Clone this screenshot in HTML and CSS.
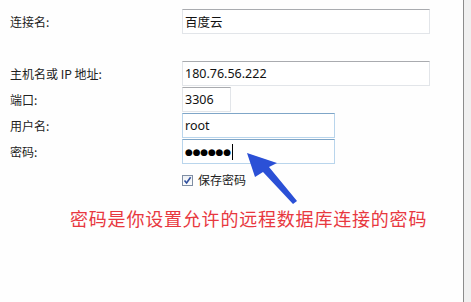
FILE: index.html
```html
<!DOCTYPE html>
<html lang="zh-CN">
<head>
<meta charset="utf-8">
<title>连接设置</title>
<link rel="stylesheet" href="styles.css">
</head>
<body>
<div class="window">
  <div class="form">
    <div class="row row-name">
      <label class="label">连接名:</label>
      <input class="field field-wide" type="text" value="百度云" readonly>
    </div>
    <div class="row row-host">
      <label class="label">主机名或 IP 地址:</label>
      <input class="field field-wide" type="text" value="180.76.56.222" readonly>
    </div>
    <div class="row row-tight">
      <label class="label">端口:</label>
      <input class="field field-port" type="text" value="3306" readonly>
    </div>
    <div class="row row-tight">
      <label class="label">用户名:</label>
      <input class="field field-mid field-blue" type="text" value="root" readonly>
    </div>
    <div class="row row-tight">
      <label class="label">密码:</label>
      <div class="field field-mid field-blue field-pass"><span class="dots">●●●●●●</span><span class="caret"></span></div>
    </div>
    <div class="row row-check">
      <span class="label"></span>
      <span class="check">
        <span class="box"><svg width="9" height="9" viewBox="0 0 9 9"><path d="M1.5 4.5 L3.6 7 L7.6 1.2" fill="none" stroke="#2f4f9e" stroke-width="1.6"/></svg></span>
        <span class="check-text">保存密码</span>
      </span>
    </div>
    <p class="note">密码是你设置允许的远程数据库连接的密码</p>
    <svg class="arrow" width="60" height="60" viewBox="240 148 60 60">
      <polygon points="247,153 277,163 269,167 297,201 293,204 263,172 255,177" fill="#2b50d6"/>
    </svg>
  </div>
  <div class="edge"></div>
</div>
</body>
</html>
```
FILE: styles.css
```css
html, body {
  margin: 0;
  padding: 0;
  background: #fefefe;
}
body {
  font-family: "Noto Sans", "Noto Sans CJK SC", sans-serif;
  font-size: 12px;
  color: #1c1c1c;
}
.window {
  display: flex;
  width: 471px;
  height: 302px;
  overflow: hidden;
}
.form {
  position: relative;
  flex: 1;
  padding: 9px 0 0 10px;
  box-sizing: border-box;
}
.edge {
  width: 7px;
  border-left: 1px solid #8c8c8c;
  background: #f0f0f0;
}
.row {
  display: flex;
  align-items: center;
}
.row-host {
  margin-top: 27px;
}
.row-tight {
  margin-top: 1px;
}
.row-check {
  margin-top: 8px;
}
.label {
  width: 172px;
  flex: none;
  font-family: "Noto Sans CJK SC", sans-serif;
  font-size: 12px;
  line-height: 16px;
  color: #222;
}
.field {
  box-sizing: border-box;
  height: 25px;
  margin: 0;
  padding: 0 0 0 2px;
  border: 1px solid #e2e5e9;
  border-top-color: #a9abaf;
  background: #fff;
  font-family: "Noto Sans", "Noto Sans CJK SC", sans-serif;
  font-size: 12.5px;
  color: #111;
  outline: none;
}
.field-wide {
  width: 248px;
}
.field-port {
  width: 49px;
}
.field-mid {
  width: 153px;
}
.field-blue {
  border-color: #b9d5ec;
  border-top-color: #7fa6c8;
}
.field-pass {
  display: flex;
  align-items: center;
  padding-left: 2px;
}
.dots {
  font-family: "DejaVu Sans", sans-serif;
  font-size: 9px;
  letter-spacing: -0.2px;
  color: #000;
}
.caret {
  width: 1px;
  height: 16px;
  margin-left: 1px;
  background: #000;
}
.check {
  display: flex;
  align-items: center;
  gap: 5px;
}
.box {
  box-sizing: border-box;
  width: 11px;
  height: 11px;
  border: 1px solid #7f8ea3;
  background: linear-gradient(#eef1f5, #fdfdfd);
  display: flex;
  align-items: center;
  justify-content: center;
}
.box svg {
  display: block;
}
.check-text {
  font-family: "Noto Sans CJK SC", sans-serif;
  font-size: 12px;
  line-height: 16px;
  color: #222;
}
.note {
  margin: 19px 0 0 60px;
  font-family: "Noto Sans CJK SC", sans-serif;
  font-size: 18px;
  line-height: 22px;
  letter-spacing: 0.8px;
  color: #e8383f;
}
.arrow {
  position: absolute;
  left: 240px;
  top: 148px;
}
```
